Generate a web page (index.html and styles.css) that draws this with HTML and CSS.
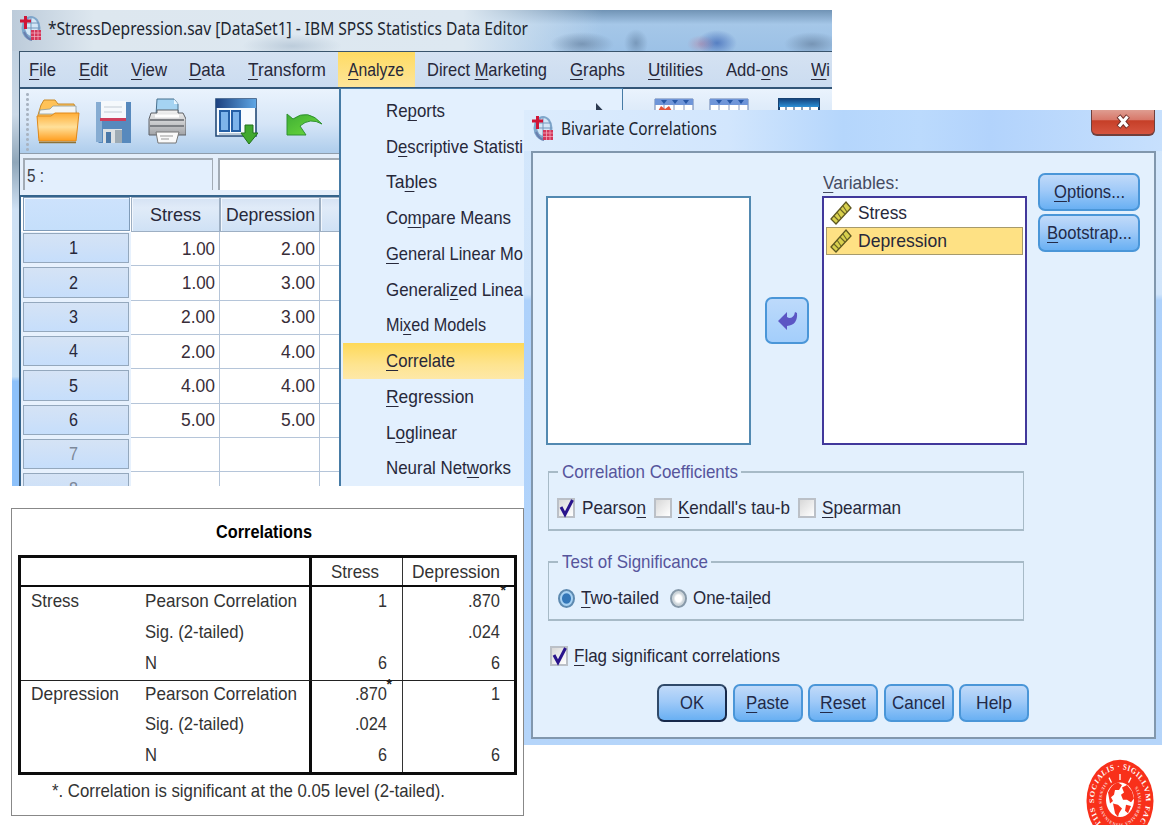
FILE: index.html
```html
<!DOCTYPE html>
<html lang="en">
<head>
<meta charset="utf-8">
<title>SPSS Bivariate Correlations</title>
<link rel="stylesheet" href="styles.css">
</head>
<body>
<svg class="defs" width="0" height="0">
  <defs>
    <linearGradient id="gold" x1="0" y1="0" x2="0" y2="1"><stop offset="0" stop-color="#ffad35"/><stop offset=".5" stop-color="#ffe09a"/><stop offset="1" stop-color="#ff9d1e"/></linearGradient>
    <linearGradient id="navy" x1="0" y1="0" x2="1" y2="0"><stop offset="0" stop-color="#1d4180"/><stop offset="1" stop-color="#5fa6e4"/></linearGradient>
    <linearGradient id="navyv" x1="0" y1="0" x2="0" y2="1"><stop offset="0" stop-color="#14457f"/><stop offset="1" stop-color="#2b8fd6"/></linearGradient>
    <linearGradient id="grey" x1="0" y1="0" x2="0" y2="1"><stop offset="0" stop-color="#f4f4f4"/><stop offset="1" stop-color="#a2a4a8"/></linearGradient>
    <linearGradient id="green" x1="0" y1="0" x2="1" y2="1"><stop offset="0" stop-color="#3fae35"/><stop offset="1" stop-color="#6fdc3c"/></linearGradient>
    <symbol id="app" viewBox="0 0 23 26">
      <ellipse cx="12" cy="13" rx="9.5" ry="12" fill="#7ea6cb"/><ellipse cx="12.500" cy="12" rx="6.500" ry="9" fill="#d3e6f6"/>
      <path d="M7 8h13M6 13h15M12 3v20" stroke="#7598bd" fill="none"/><path d="M5 17q3 7 8 8" stroke="#6a7fae" stroke-width="2" fill="none"/>
      <path d="M1 6h11M6.500 1v13" stroke="#d01436" stroke-width="3"/><path d="M12 15h10v10H12z" fill="#d4375a"/><path d="M12 18h10M12 21.500h10M15.500 15v10M19 15v10" stroke="#f2b4c4" stroke-width=".7"/>
    </symbol>
    <symbol id="ruler" viewBox="0 0 22 24">
      <path d="M1 18 16 1l5 6L6 23z" fill="#d8d04d" stroke="#5d5720" stroke-width="1.300"/><path d="m4 15 5 5M7 11l4 6M10 8l5 5M13 5l4 6" stroke="#6a6326" stroke-width="1.100"/>
    </symbol>
    <symbol id="tick" viewBox="0 0 18 21"><path d="m4 9 4 7.500L15.500 2" fill="none" stroke="#29148c" stroke-width="3"/></symbol>
  </defs>
</svg>

<main class="canvas">
  <section class="window editor">
    <header class="titlebar">
      <svg class="app-icon"><use href="#app"/></svg>
      <span class="fit" data-w="480">*StressDepression.sav [DataSet1] - IBM SPSS Statistics Data Editor</span>
    </header>
    <div class="client">
      <nav class="menubar">
        <a><span class="fit" data-w="27"><u>F</u>ile</span></a>
        <a><span class="fit" data-w="29"><u>E</u>dit</span></a>
        <a><span class="fit" data-w="36"><u>V</u>iew</span></a>
        <a><span class="fit" data-w="36"><u>D</u>ata</span></a>
        <a><span class="fit" data-w="78"><u>T</u>ransform</span></a>
        <a class="open"><span class="fit" data-w="56"><u>A</u>nalyze</span></a>
        <a><span class="fit" data-w="120">Direct <u>M</u>arketing</span></a>
        <a><span class="fit" data-w="55"><u>G</u>raphs</span></a>
        <a><span class="fit" data-w="55"><u>U</u>tilities</span></a>
        <a><span class="fit" data-w="62">Add-<u>o</u>ns</span></a>
        <a><span class="fit" data-w="19"><u>W</u>i</span></a>
      </nav>
      <div class="toolbar">
        <i class="grip"></i>
        <svg class="tool" width="44" height="46" viewBox="0 0 44 46">
          <path d="M3 40 2 17 5 7l3-5h11l3 4h16l2 8v26z" fill="#ffc258" stroke="#c98a28"/><path d="m3 16 1-4 10-1 3-3h23v8z" fill="#f2f5f5" stroke="#8a9b9c" stroke-width=".8"/>
          <path d="M1 18h14l4-3h24l-3 28H3z" fill="url(#gold)" stroke="#e08a1c"/><path d="M3 44.500h37" stroke="#8d7337" stroke-width="1.500"/>
        </svg>
        <svg class="tool save" width="37" height="44" viewBox="0 0 37 44">
          <path d="M1 1h35v41H4l-3-3z" fill="#5789bd"/><path d="M1 1h6v40H1z" fill="#86acd2"/><path d="M6 0h25v19H6z" fill="#f5f9fc"/><path d="M9 6h18M9 11h18" stroke="#c3ccd5"/><path d="M5 17h26v3H5z" fill="#cf3e5c"/><path d="M8 28h19v14H8z" fill="#dce1e4"/><path d="M11 31h5v11h-5z" fill="#4a78a8"/><path d="M20 29h7v13h-7z" fill="#9eabb4"/>
        </svg>
        <svg class="tool print" width="38" height="48" viewBox="0 0 38 48">
          <path d="M9 1h17l4 5v11H8z" fill="#a5d3f2" stroke="#47708e"/><path d="m26 1 4 5h-4z" fill="#e9f6ff"/><path d="M3 15h6v-3h21v3h5l3 6v16H1V21z" fill="url(#grey)" stroke="#5d6066"/><path d="M2 22h34M2 28h34" stroke="#7d8085" stroke-width="2"/><path d="M7 18h24" stroke="#fff" stroke-width="3"/><path d="m8 34 2 11h18l3-11z" fill="#fafafa" stroke="#777"/><path d="M12 38h13M13 41h8" stroke="#999"/>
        </svg>
        <svg class="tool recall" width="43" height="47" viewBox="0 0 43 47">
          <path d="M1 1h40v37H1z" fill="#f7fbff" stroke="#244a77" stroke-width="1.600"/><path d="M1 1h40v9H1z" fill="url(#navy)"/><path d="M5 13h9v20H5zM17 13h8v20h-8z" fill="#7db4ea" stroke="#245fa5" stroke-width="2"/><path d="M4 36h24" stroke="#7d99b5"/><path d="M30 27h8v8h5l-9 11-8-11h4z" fill="#41a92e" stroke="#23731d"/>
        </svg>
        <svg class="tool undo" width="37" height="25" viewBox="0 0 37 25">
          <path d="M1 2 7 7Q22-4 36 12 24 5 14 14l6 9H1z" fill="url(#green)" stroke="#2f9132"/>
        </svg>
        <svg class="tool far" width="40" height="46" viewBox="0 0 40 46">
          <path d="M1 1h38v44H1z" fill="#fff" stroke="#657fae"/><path d="M1 1h38v6H1z" fill="#6f95d8"/><path d="m7 2 3 4 3-4m5 0 3 4 3-4m5 0 3 4 3-4" fill="#2857a5"/><path d="M1 13h38M10 7v38M20 7v38M30 7v38" stroke="#8498be"/><path d="m4 13 3-5 4 3 4-3 3 5z" fill="#e3543a"/>
        </svg>
        <svg class="tool near" width="40" height="46" viewBox="0 0 40 46">
          <path d="M1 1h38v44H1z" fill="#fff" stroke="#657fae"/><path d="M1 1h38v6H1z" fill="#6f95d8"/><path d="m7 2 3 4 3-4m5 0 3 4 3-4m5 0 3 4 3-4" fill="#2857a5"/><path d="M1 13h38M10 7v38M20 7v38M30 7v38" stroke="#8498be"/>
        </svg>
        <svg class="tool wide" width="42" height="46" viewBox="0 0 42 46">
          <path d="M1 1h40v44H1z" fill="#fff" stroke="#174272" stroke-width="2"/><path d="M1 1h40v8H1z" fill="url(#navyv)"/><path d="M8 9v36M16 9v36M24 9v36M32 9v36" stroke="#174272"/>
        </svg>
      </div>
      <div class="cellbar"><div class="cellref"><span class="fit" data-w="17">5 :</span></div><div class="cellinput"></div></div>
      <div class="sheet">
        <div class="head corner"></div><div class="head"><span class="fit" data-w="51">Stress</span></div><div class="head"><span class="fit" data-w="89">Depression</span></div><div class="head"></div>
        <div class="num"><b><span class="fit" data-w="9">1</span></b></div><div class="cell"><span class="fit" data-w="33">1.00</span></div><div class="cell"><span class="fit" data-w="34">2.00</span></div><div class="cell"></div>
        <div class="num"><b><span class="fit" data-w="9">2</span></b></div><div class="cell"><span class="fit" data-w="33">1.00</span></div><div class="cell"><span class="fit" data-w="34">3.00</span></div><div class="cell"></div>
        <div class="num"><b><span class="fit" data-w="9">3</span></b></div><div class="cell"><span class="fit" data-w="34">2.00</span></div><div class="cell"><span class="fit" data-w="34">3.00</span></div><div class="cell"></div>
        <div class="num"><b><span class="fit" data-w="9">4</span></b></div><div class="cell"><span class="fit" data-w="34">2.00</span></div><div class="cell"><span class="fit" data-w="34">4.00</span></div><div class="cell"></div>
        <div class="num"><b><span class="fit" data-w="9">5</span></b></div><div class="cell"><span class="fit" data-w="34">4.00</span></div><div class="cell"><span class="fit" data-w="34">4.00</span></div><div class="cell"></div>
        <div class="num"><b><span class="fit" data-w="9">6</span></b></div><div class="cell"><span class="fit" data-w="34">5.00</span></div><div class="cell"><span class="fit" data-w="34">5.00</span></div><div class="cell"></div>
        <div class="num empty"><b><span class="fit" data-w="9">7</span></b></div><div class="cell"></div><div class="cell"></div><div class="cell"></div>
        <div class="num empty"><b><span class="fit" data-w="9">8</span></b></div><div class="cell"></div><div class="cell"></div><div class="cell"></div>
      </div>
    </div>
    <ul class="dropdown">
      <li><span class="fit" data-w="59">Re<u>p</u>orts</span><svg class="sub" width="8" height="15" viewBox="0 0 8 15"><path d="M0 0 7 7.500 0 15z" fill="#2c3a50"/></svg></li>
      <li><span class="fit" data-w="137">D<u>e</u>scriptive Statisti</span></li>
      <li><span class="fit" data-w="51">Ta<u>b</u>les</span></li>
      <li><span class="fit" data-w="125">Co<u>m</u>pare Means</span></li>
      <li><span class="fit" data-w="137"><u>G</u>eneral Linear Mo</span></li>
      <li><span class="fit" data-w="137">Generali<u>z</u>ed Linea</span></li>
      <li><span class="fit" data-w="100">Mi<u>x</u>ed Models</span></li>
      <li class="active"><span class="fit" data-w="69"><u>C</u>orrelate</span></li>
      <li><span class="fit" data-w="88"><u>R</u>egression</span></li>
      <li><span class="fit" data-w="71">L<u>o</u>glinear</span></li>
      <li><span class="fit" data-w="125">Neural Net<u>w</u>orks</span></li>
    </ul>
  </section>

  <section class="window dialog">
    <header class="titlebar">
      <svg class="app-icon"><use href="#app"/></svg>
      <span class="fit" data-w="156">Bivariate Correlations</span>
      <button class="close"><svg width="15" height="15" viewBox="0 0 15 15"><path d="m2.500 2 9.500 11M12 2 2.500 13" stroke="#70302a" stroke-width="5"/><path d="m3 2.500 8.500 10M11.500 2.500 3 12.500" stroke="#fff" stroke-width="3.200"/></svg></button>
    </header>
    <div class="panel">
      <div class="pickers">
        <div class="list"></div>
        <button class="btn move"><svg width="21" height="20" viewBox="0 0 21 20"><path d="M1 10 10 1v5l2 1q5 0 6-6l2 1q1 12-10 13v4z" fill="#5c56c4"/></svg></button>
        <div class="vars">
          <label><span class="fit" data-w="76"><u>V</u>ariables:</span></label>
          <div class="list focus">
            <div class="var"><svg width="22" height="24"><use href="#ruler"/></svg><span class="fit" data-w="49">Stress</span></div>
            <div class="var chosen"><svg width="22" height="24"><use href="#ruler"/></svg><span class="fit" data-w="89">Depression</span></div>
          </div>
        </div>
        <div class="side">
          <button class="btn"><span class="fit" data-w="71"><u>O</u>ptions...</span></button>
          <button class="btn"><span class="fit" data-w="85"><u>B</u>ootstrap...</span></button>
        </div>
      </div>
      <fieldset>
        <legend><span class="fit" data-w="176">Correlation Coefficients</span></legend>
        <i class="check"><svg><use href="#tick"/></svg></i><span class="fit" data-w="64">Pearso<u>n</u></span>
        <i class="check"></i><span class="fit" data-w="112"><u>K</u>endall's tau-b</span>
        <i class="check"></i><span class="fit" data-w="79"><u>S</u>pearman</span>
      </fieldset>
      <fieldset class="test">
        <legend><span class="fit" data-w="146">Test of Significance</span></legend>
        <i class="radio on"></i><span class="fit" data-w="78"><u>T</u>wo-tailed</span>
        <i class="radio second"></i><span class="fit" data-w="78">One-tai<u>l</u>ed</span>
      </fieldset>
      <div class="flag"><i class="check"><svg><use href="#tick"/></svg></i><span class="fit" data-w="206"><u>F</u>lag significant correlations</span></div>
      <footer class="actions">
        <button class="btn default"><span class="fit" data-w="24">OK</span></button>
        <button class="btn"><span class="fit" data-w="43"><u>P</u>aste</span></button>
        <button class="btn"><span class="fit" data-w="46"><u>R</u>eset</span></button>
        <button class="btn"><span class="fit" data-w="53">Cancel</span></button>
        <button class="btn"><span class="fit" data-w="36">Help</span></button>
      </footer>
    </div>
  </section>

  <section class="output">
    <h2><span class="fit" data-w="96">Correlations</span></h2>
    <div class="table">
      <div class="row header"><div class="lbl"></div><div class="stat"></div><div class="v1"><span class="fit" data-w="48">Stress</span></div><div class="v2"><span class="fit" data-w="88">Depression</span></div></div>
      <div class="row"><div class="lbl"><span class="fit" data-w="48">Stress</span></div><div class="stat"><span class="fit" data-w="152">Pearson Correlation</span></div><div class="v1"><span class="fit" data-w="9">1</span></div><div class="v2"><span class="fit" data-w="32">.870</span><sup>*</sup></div></div>
      <div class="row"><div class="lbl"></div><div class="stat"><span class="fit" data-w="99">Sig. (2-tailed)</span></div><div class="v1"></div><div class="v2"><span class="fit" data-w="32">.024</span></div></div>
      <div class="row"><div class="lbl"></div><div class="stat"><span class="fit" data-w="12">N</span></div><div class="v1"><span class="fit" data-w="9">6</span></div><div class="v2"><span class="fit" data-w="9">6</span></div></div>
      <div class="row split"><div class="lbl"><span class="fit" data-w="88">Depression</span></div><div class="stat"><span class="fit" data-w="152">Pearson Correlation</span></div><div class="v1"><span class="fit" data-w="32">.870</span><sup>*</sup></div><div class="v2"><span class="fit" data-w="9">1</span></div></div>
      <div class="row"><div class="lbl"></div><div class="stat"><span class="fit" data-w="99">Sig. (2-tailed)</span></div><div class="v1"><span class="fit" data-w="32">.024</span></div><div class="v2"></div></div>
      <div class="row"><div class="lbl"></div><div class="stat"><span class="fit" data-w="12">N</span></div><div class="v1"><span class="fit" data-w="9">6</span></div><div class="v2"><span class="fit" data-w="9">6</span></div></div>
    </div>
    <p><span class="fit" data-w="393">*. Correlation is significant at the 0.05 level (2-tailed).</span></p>
  </section>

  <svg class="seal" width="68" height="66" viewBox="0 0 68 66">
    <g transform="translate(34 42) scale(1 1.230)">
      <circle r="33.500" fill="#f8301a"/>
      <path id="outer" d="M-18.400 18.400A26 26 0 1 1 18.400 18.400" fill="none"/>
      <path id="inner" d="M-14-15.700A21 21 0 1 0 14-15.700" fill="none"/>
      <text class="seal-outer"><textPath href="#outer" textLength="120">TIIS SOCIALIS · SIGILLVM FAC</textPath></text>
      <text class="seal-inner"><textPath href="#inner" textLength="96">SIENSIS HAVNIENSIS VNIVERSITATIS</textPath></text>
      <circle r="14" fill="#fff" cy="-1"/>
      <path d="M-12-7q4-7 10-8l4 2-3 4-4 0-1 4-3 2 2 3-3 2zM2-11l5-2 5 5 2 6-3 3-4-2-4 0-2-4 3-2zM-7 2l5 1 4 3-3 4-1 3-3-3zM6 3l5 1-3 6-3-2z" fill="#f8301a"/>
      <path d="M0-22v5M-11-19l2.500 4M11-19l-2.500 4" stroke="#fff" stroke-width="1.300"/>
    </g>
  </svg>
</main>
<script src="fit.js"></script>
</body>
</html>
```
FILE: styles.css
```css
* { box-sizing: border-box; }
body { margin: 0; background: #fff; font: 19px/22px "Liberation Sans", Arial, sans-serif; color: #27283a; }
button { font: inherit; color: inherit; padding: 0; margin: 0; }
u { text-decoration: underline; text-decoration-thickness: 1.3px; text-underline-offset: 3px; text-decoration-skip-ink: none; }
i { display: block; flex: none; }
.defs { position: absolute; }
.canvas { position: relative; width: 1162px; height: 825px; overflow: hidden; }
.fit { display: inline-block; flex: none; white-space: nowrap; transform-origin: 0 50%; }
.window { position: absolute; overflow: hidden; }
.titlebar { display: flex; align-items: center; font: 18px/24px "Noto Sans", "Open Sans", sans-serif; color: #20252f; }
.app-icon { width: 23px; height: 26px; flex: none; margin-right: 7px; }

.editor { left: 12px; top: 10px; width: 820px; height: 476px; padding-left: 7px; background: linear-gradient(#b7cadb 0, #cbd9e7 22%, #8fa6b9 32%, #cfe1f4 42%, #c5dff5 77%, #8dc1fa 78%); }
.editor > .titlebar { height: 41px; margin-left: -7px; padding: 0 0 5px 7px;
  background: radial-gradient(14px 9px at 689px 34px, #c05a7855, transparent), radial-gradient(20px 13px at 705px 33px, #3c66b5bb, transparent), radial-gradient(32px 12px at 570px 34px, #6884a3bb, transparent), radial-gradient(12px 14px at 624px 33px, #5f7d9e99, transparent), radial-gradient(28px 12px at 800px 34px, #6884a3bb, transparent), radial-gradient(50px 12px at 280px 36px, #8ba3bb66, transparent), linear-gradient(90deg, #bccbda 0, #dde7ef 10%, #dde8f1 55%, transparent 72%), linear-gradient(#7093b5, #a5c7e8 35%, #9cc1e6); }
.editor .app-icon { margin-right: 6px; }
.client { border: solid #39546c; border-width: 1px 0 0 1px; height: 435px; background: #e5effb; }
.menubar { display: flex; height: 37px; align-items: stretch; border-bottom: 2px solid #335677; background: linear-gradient(#d5e2f2, #cbdcf0); overflow: hidden; white-space: nowrap; }
.menubar a { display: flex; align-items: center; flex: none; padding: 0 11.4px; }
.menubar a:first-child { padding-left: 9px; }
.menubar a:nth-child(n+8) { padding: 0 11.6px; }
.menubar .open { padding: 0 11px 0 10.8px; background: linear-gradient(#ffdb63, #fde59a); }
.menubar a:last-child { padding-right: 0; }
.toolbar { display: flex; align-items: flex-start; height: 65px; padding: 9px 0 0 7px; border-bottom: 1px solid #8f9dac; background: linear-gradient(#eaf3fd, #d5e5f7 55%, #aecdec); }
.grip { width: 3px; height: 60px; margin: -6px 7px 0 -1px; background: radial-gradient(circle, #a9b4c2 1.3px, transparent 1.6px) 0 0 / 3px 5px; }
.tool { flex: none; }
.save { margin: 3px 0 0 15px; } .print { margin-left: 16px; } .recall { margin-left: 29px; }
.undo { margin: 14px 0 0 28px; } .far { margin-left: 331px; } .near { margin-left: 15px; } .wide { margin-left: 29px; }
.cellbar { display: flex; gap: 5px; height: 41px; padding: 4px 0 5px 3px; }
.cellref { width: 190px; border: solid #a2abb5; border-width: 2px 1px 0 2px; padding: 5px 0 0 2px; color: #3a3d46; background: #e3effd; }
.cellinput { flex: 1; border: solid #a2abb5; border-width: 2px 0 0 2px; background: #fff; }
.sheet { display: grid; grid-template-columns: 110px 89px 100px 1fr; grid-template-rows: 35px; grid-auto-rows: 34.35px; border: solid #35648c; border-width: 2px 0 0 1px; width: 322px; background: #fff; }
.head { display: flex; align-items: center; justify-content: center; border: solid #9dafc3; border-width: 1px; background: linear-gradient(#d5e2f3, #e0ebf8 30%, #cfe1f5); box-shadow: inset 1px 1px #f2f7fd; }
.head.corner { background: linear-gradient(#cde2fc, #c5dffb); border-color: #7f9bb8; margin: 0 1px 1px 2px; }
.num { padding: 1px 2px 3px 2px; background: #e7f1fd; }
.num b { display: flex; align-items: center; justify-content: center; height: 100%; padding-right: 5px; font-weight: normal; border: 1px solid #94a8bd; background: linear-gradient(#d5e3f5, #c6defb); }
.num.empty b { color: #7c8899; }
.cell { display: flex; align-items: center; justify-content: flex-end; padding-right: 4px; border: solid #b5c5d9; border-width: 0 1px 1px 0; color: #382d38; }
.cell:nth-child(4n) { border-right: 0; }
.dropdown { position: absolute; left: 327px; top: 78px; width: 284px; height: 398px; margin: 0; padding: 4px 0 0 2px; list-style: none; border: solid #467ba5; border-width: 1px 1px 0 2px; background: #e3f0fe; }
.dropdown li { display: flex; align-items: center; height: 35.75px; padding-left: 43px; }
.dropdown .active { background: linear-gradient(#fed958, #fee490 60%, #fde8a8); }
.sub { margin: 0 18px 0 auto; }

.dialog { left: 524px; top: 110px; width: 638px; height: 635px; padding: 0 7px; background: linear-gradient(#d3e7fc 0, #d1e5fb 29%, #add1fb 30%, #b5d5fa); }
.dialog > .titlebar { height: 41px; margin: 0 -7px; padding: 0 7px 6px 7px; background: linear-gradient(90deg, #dcecfd 0, #d2e6fd 32%, #b5d6fc 50%, #bbdafd 62%, #b2d3fc 73%, #c7e0fd); }
.close { align-self: flex-start; margin-left: auto; display: flex; width: 64px; height: 26px; align-items: center; justify-content: center; border: solid #703f3c; border-width: 0 1px 2px; border-radius: 0 0 6px 6px; background: linear-gradient(#df9d91 0, #d8796b 40%, #c63f28 45%, #d65540); padding-bottom: 2px; }
.panel { width: 625px; height: 588px; padding: 21px 0 0 13px; border: 2px solid #8197ad; background: #e3f0fd; }
.pickers { display: flex; align-items: flex-end; height: 271px; }
.list { width: 205px; height: 249px; border: 2px solid #5289b1; background: #fff; }
.list.focus { border-color: #41389b; padding: 1px 2px; }
.vars label { display: block; height: 22px; line-height: 18px; padding-left: 1px; color: #454b61; }
.btn { display: flex; align-items: center; justify-content: center; height: 38px; border: 2px solid #4a96d8; border-radius: 7px; background: linear-gradient(#c1daf9, #a0caf8 45%, #69b0f3); color: #222a48; }
.move { width: 44px; height: 47px; margin: 0 13px 101px 14px; background: linear-gradient(#bddafb, #a3cefb); }
.var { display: flex; align-items: center; height: 28px; gap: 6px; padding-left: 3px; border: 1px solid transparent; }
.var.chosen { background: #fee184; border-color: #a69a6c; }
.side { align-self: flex-start; display: flex; flex-direction: column; gap: 3px; width: 102px; margin: -1px 0 0 11px; }
fieldset { display: flex; align-items: center; width: 476px; height: 70px; min-width: 0; margin: 16px 0 0 2px; padding: 8px 0 4px 8px; border: 2px solid #a7bac7; border-right-width: 1px; border-left-width: 1px; }
legend { padding: 0 3px 0 4px; margin-left: 1px; color: #56559c; }
.check { width: 18px; height: 20px; border: 2px solid #bbc0c7; background: linear-gradient(135deg, #d8d8d8, #fff); margin-right: 7px; }
.check svg { display: block; width: 18px; height: 21px; margin: -2px; }
.fit + .check { margin-left: 8px; margin-right: 6px; }
fieldset.test { margin-top: 20px; }
.radio { width: 17px; height: 19px; border: 2px solid #8799a9; border-radius: 50%; background: radial-gradient(#fff 0 3px, #cdd5da 5px); margin: 0 6px 0 1px; }
.radio.on { border-color: #5e8ab0; background: radial-gradient(#3477b8 0 4px, #a8d2f3 5px); }
.radio.second { margin-left: 11px; }
.flag { display: flex; align-items: center; margin-top: 24px; padding-left: 4px; }
.flag .check { margin-right: 6px; }
.actions { display: flex; gap: 5.5px; margin: 17px 0 0 111px; }
.actions .btn { width: 70px; }
.actions .default { border-color: #2f4969 #17294a #17294a #2f4969; }

.output { position: absolute; left: 11px; top: 508px; width: 513px; height: 308px; padding: 11px 6px 0; border: 1px solid #888; background: #fff; color: #333; }
.output h2 { margin: 0; height: 35px; padding-left: 198px; font-size: 19px; line-height: 24px; color: #000; }
.table { border: 3px solid #0c0c0c; width: 499px; height: 220px; }
.row { display: grid; grid-template-columns: 123px 168px 91px 1fr; height: 30.8px; }
.row > div { display: flex; align-items: center; padding-bottom: 3px; }
.row .lbl { padding-left: 10px; }
.row .stat { padding-left: 1px; border-right: 3px solid #0c0c0c; }
.row .v1 { justify-content: flex-end; border-right: 1px solid #333; padding-right: 15px; position: relative; }
.row .v2 { justify-content: flex-end; padding-right: 14px; position: relative; }
.row.header { height: 29.2px; border-bottom: 2px solid #0c0c0c; }
.row.header > div { padding-bottom: 0; }
.row.header .v1 { padding-right: 23px; }
.split { border-top: 1px solid #222; }
sup { position: absolute; right: 8px; top: -4px; font-size: 14px; line-height: 14px; font-weight: bold; color: #222; }
.row .v1 sup { right: 10px; }
.output p { margin: 5px 0 0 34px; }

.seal { position: absolute; left: 1086px; top: 759px; }
.seal text { fill: #fff; font-family: "Liberation Serif", serif; font-weight: bold; }
.seal-outer { font-size: 6.8px; }
.seal-inner { font-size: 4px; opacity: .8; }
```
FILE: fit.js
```js
// Condense each label to its design width so the flow uses that width.
document.querySelectorAll('.fit').forEach(function (el) {
  var natural = el.getBoundingClientRect().width;
  var target = Number(el.dataset.w);
  el.style.transform = 'scaleX(' + target / natural + ')';
  el.style.marginRight = (target - natural) + 'px';
});
```
